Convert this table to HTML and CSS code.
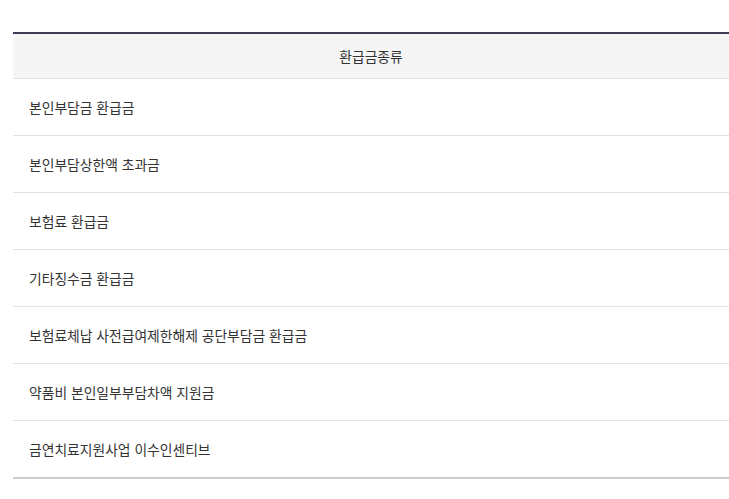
FILE: index.html
```html
<!DOCTYPE html>
<html lang="ko">
<head>
<meta charset="utf-8">
<link rel="stylesheet" href="styles.css">
</head>
<body>
<table class="refund-table">
  <thead>
    <tr><th>환급금종류</th></tr>
  </thead>
  <tbody>
    <tr><td>본인부담금 환급금</td></tr>
    <tr><td>본인부담상한액 초과금</td></tr>
    <tr><td>보험료 환급금</td></tr>
    <tr><td>기타징수금 환급금</td></tr>
    <tr><td>보험료체납 사전급여제한해제 공단부담금 환급금</td></tr>
    <tr><td>약품비 본인일부부담차액 지원금</td></tr>
    <tr><td>금연치료지원사업 이수인센티브</td></tr>
  </tbody>
</table>
</body>
</html>
```
FILE: styles.css
```css
html, body {
  margin: 0;
  padding: 0;
  background: #fff;
}
body {
  padding: 32px 0 0 13px;
  font-family: "Noto Sans CJK KR", "Noto Sans", sans-serif;
  font-size: 13.8px;
  color: #333;
}
.refund-table {
  width: 100%;
  border-collapse: collapse;
  border-top: 2px solid #3d3f54;
  border-bottom: 2px solid #c9cdd2;
}
.refund-table th {
  height: 44px;
  padding: 0;
  background: #f5f5f5;
  font-weight: normal;
  text-align: center;
  border-bottom: 1px solid #e2e2e2;
}
.refund-table td {
  height: 56px;
  padding: 0 0 0 16px;
  text-align: left;
  border-bottom: 1px solid #e2e2e2;
}
.refund-table tr:last-child td {
  border-bottom: none;
}
```
